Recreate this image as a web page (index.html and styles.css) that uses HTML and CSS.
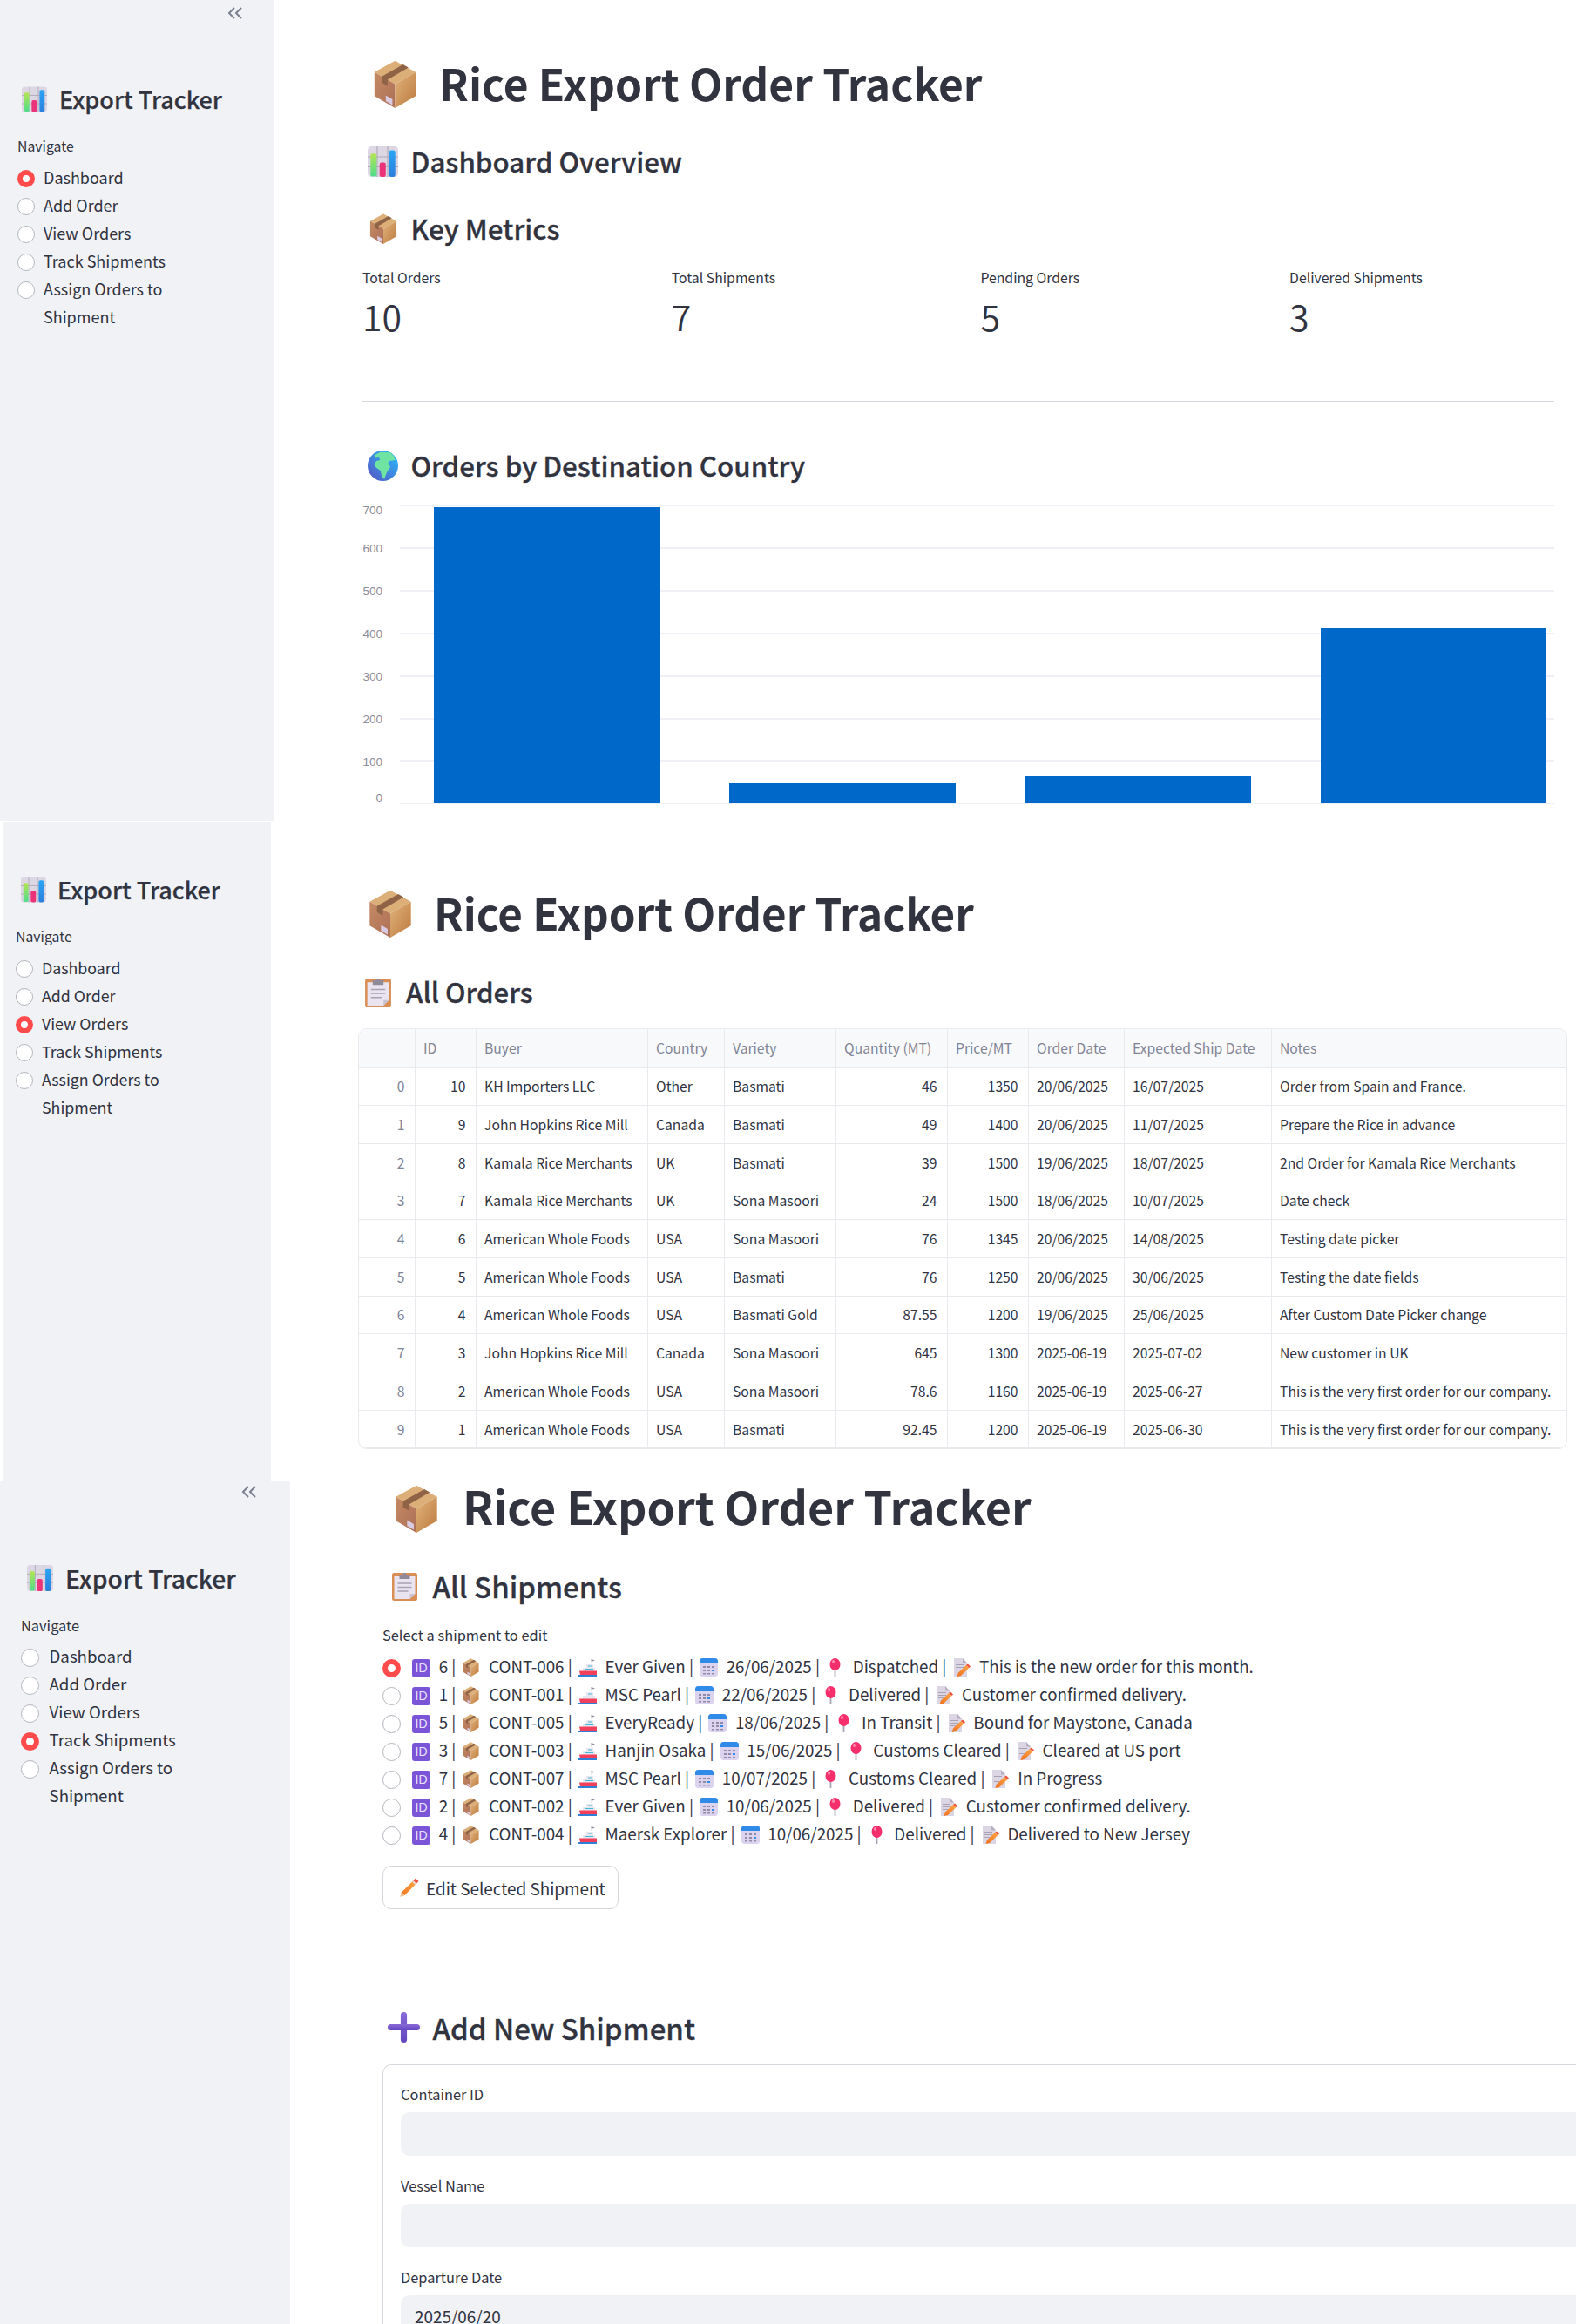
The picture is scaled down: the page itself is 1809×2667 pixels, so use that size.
FILE: index.html
```html
<!DOCTYPE html>
<html lang="en">
<head>
<meta charset="utf-8">
<title>Rice Export Order Tracker</title>
<link rel="stylesheet" href="styles.css">
</head>
<body>
<svg class="icon-defs" aria-hidden="true">
  <defs>
    <linearGradient id="g-left" x1="0" y1="0" x2="1" y2="1"><stop offset="0" stop-color="#c48a62"/><stop offset="1" stop-color="#ad6f58"/></linearGradient>
    <linearGradient id="g-right" x1="0" y1="0" x2="1" y2="1"><stop offset="0" stop-color="#e0b37c"/><stop offset="1" stop-color="#bd7a3e"/></linearGradient>
    <linearGradient id="g-green" x1="0" y1="0" x2="0" y2="1"><stop offset="0" stop-color="#b4e455"/><stop offset="1" stop-color="#4fdc8a"/></linearGradient>
    <linearGradient id="g-blue" x1="0" y1="0" x2="0" y2="1"><stop offset="0" stop-color="#2aa5f5"/><stop offset="1" stop-color="#2a7fdc"/></linearGradient>
    <linearGradient id="g-globe" x1="1" y1="0" x2="0" y2="1"><stop offset="0" stop-color="#28c0ff"/><stop offset="1" stop-color="#5550c0"/></linearGradient>
    <linearGradient id="g-purple" x1="0" y1="0" x2="0" y2="1"><stop offset="0" stop-color="#8a6ad8"/><stop offset="1" stop-color="#6246c0"/></linearGradient>
    <linearGradient id="g-pencil" x1="1" y1="0" x2="0" y2="1"><stop offset="0" stop-color="#ffa94a"/><stop offset="1" stop-color="#ee6f1f"/></linearGradient>
  </defs>
  <symbol id="i-box" viewBox="0 0 32 36">
    <path fill="#dcae78" d="M16 0.5 31.5 9 16 18 0.5 9z"/>
    <path fill="url(#g-left)" d="M0.5 9 16 18v18L0.5 27z"/>
    <path fill="url(#g-right)" d="M31.5 9 16 18v18l15.5-9z"/>
    <path fill="#8f6446" d="M6 12.2 22 3.2 26 5.5 10.4 14.7v4.7L6 16.9z"/>
    <path fill="#d9cbe3" d="M9 26.5l5 2.9v4.3l-5-2.9z"/>
  </symbol>
  <symbol id="i-chart" viewBox="0 0 32 32">
    <rect width="32" height="32" rx="4" fill="#ddd7e4"/>
    <path stroke="#b0aab8" stroke-width="1" d="M10 0v32M21 0v32M0 11h32M0 21.500h32" fill="none"/>
    <rect x="3" y="7.500" width="6.500" height="24" rx="2" fill="url(#g-green)"/>
    <rect x="12.500" y="17" width="6.500" height="15" rx="2" fill="#ea3378"/>
    <rect x="22.500" y="4" width="6.500" height="28" rx="2" fill="url(#g-blue)"/>
  </symbol>
  <symbol id="i-clip" viewBox="0 0 30 34">
    <rect x="0.500" y="2" width="29" height="32" rx="2.500" fill="#d88e55"/>
    <path fill="#e9e4f0" d="M3 6h24v20l-6 6H3z"/>
    <path fill="#c9c2d3" d="M27 26h-6v6z"/>
    <path stroke="#a8a2b4" stroke-width="1.400" d="M7 14h16M7 18.500h16M7 23h12" fill="none"/>
    <path fill="#8f8a98" d="M9 4h4a2 2 0 0 1 4 0h4v5H9z"/>
  </symbol>
  <symbol id="i-globe" viewBox="0 0 32 32">
    <circle cx="16" cy="16" r="16" fill="url(#g-globe)"/>
    <path fill="#6fe3a2" d="M7 5 13 1.500 24 2 27.500 6 29 10 23 11 21 14 24 17 20 23 17.500 30 15 28 13.500 21 9 18 7 15 9 11 13 10 12 7 8 8z"/>
  </symbol>
  <symbol id="i-plus" viewBox="0 0 36 34">
    <rect x="14.500" y="0" width="7" height="34" rx="3.500" fill="url(#g-purple)"/>
    <rect x="0" y="13.500" width="36" height="7" rx="3.500" fill="url(#g-purple)"/>
  </symbol>
  <symbol id="i-ship" viewBox="0 0 21 21">
    <path fill="#8a8fa0" d="M14.500 1 19 2.500 14.500 4z"/>
    <path fill="#e8e6ee" d="M14 3h1.500v3H14zM9 7h8v4H9zM5 11h14v4H5z"/>
    <path fill="#41b8d8" d="M7 12h10v1H7zM11 8.500h5v1h-5z"/>
    <path fill="#f23f5c" d="M1 14.500h20v4.500H2z"/>
    <path fill="#2f7fd8" d="M0 19h21v2H0z"/>
  </symbol>
  <symbol id="i-cal" viewBox="0 0 21 21">
    <rect y="0" width="21" height="21" rx="3.500" fill="#dcd3ee"/>
    <path fill="#2f8ae8" d="M0 3.500A3.500 3.500 0 0 1 3.500 0h14A3.500 3.500 0 0 1 21 3.500V6H0z"/>
    <path fill="#8f8aa8" d="M4 9h3v2H4zM9 9h3v2H9zM14 9h3v2h-3zM4 13h3v2H4zM9 13h3v2H9zM4 17h3v1.500H4zM9 17h3v1.500H9zM14 17h3v1.500h-3z"/>
    <path fill="#2f8ae8" d="M14 13h3v2h-3z"/>
  </symbol>
  <symbol id="i-pin" viewBox="0 0 21 21">
    <path stroke="#a8a4b4" stroke-width="1.800" d="M10.500 10v11" fill="none"/>
    <ellipse cx="10.500" cy="7" rx="6" ry="7" fill="#f42f6c"/>
    <ellipse cx="8.500" cy="4" rx="1.500" ry="2" fill="#ff8fb0"/>
  </symbol>
  <symbol id="i-memo" viewBox="0 0 21 21">
    <path fill="#dcd6e4" d="M2 0h10l5 5.500V21H2z"/>
    <path fill="#b7afc2" d="M12 0l5 5.500h-5z"/>
    <path stroke="#a8a2b4" stroke-width="1" d="M4 7.500h9M4 10.500h9M4 13.500h6" fill="none"/>
    <path fill="url(#g-pencil)" d="M16 8 19.500 11 10 20 5.500 21 7 16.500z"/>
    <path fill="#f0503c" d="M16 8 18 6.500 21 9.500 19.500 11z"/>
  </symbol>
  <symbol id="i-pencil" viewBox="0 0 22 22">
    <path fill="url(#g-pencil)" d="M15 3.500 18.500 7 5.500 20 .5 21.500 2 16.500z"/>
    <path fill="#f0503c" d="M15 3.500 18 .5 21.500 4 18.500 7z"/>
    <path fill="#efd3d0" d="M14 4.500 15.500 3 19 6.500 17.500 8z"/>
    <path fill="#e8c79a" d="M2 16.500 5.500 20 .5 21.500z"/>
  </symbol>
</svg>

<section class="screen screen-dashboard">
  <aside class="sidebar">
    <div class="collapse"><svg class="chevrons" viewBox="0 0 18 14"><path d="M8 1 2 7l6 6M16 1l-6 6 6 6"/></svg></div>
    <h2 class="side-title"><svg class="side-icon"><use href="#i-chart"/></svg>Export Tracker</h2>
    <div class="side-label">Navigate</div>
    <ul class="nav">
      <li class="nav-item"><span class="radio radio-on"></span><span>Dashboard</span></li>
      <li class="nav-item"><span class="radio"></span><span>Add Order</span></li>
      <li class="nav-item"><span class="radio"></span><span>View Orders</span></li>
      <li class="nav-item"><span class="radio"></span><span>Track Shipments</span></li>
      <li class="nav-item"><span class="radio"></span><span>Assign Orders to<br>Shipment</span></li>
    </ul>
  </aside>
  <main class="main">
    <h1 class="page-title"><svg class="title-icon"><use href="#i-box"/></svg>Rice Export Order Tracker</h1>
    <h2 class="heading heading-overview"><svg class="head-icon"><use href="#i-chart"/></svg>Dashboard Overview</h2>
    <h3 class="heading heading-metrics"><svg class="head-icon head-icon-box"><use href="#i-box"/></svg>Key Metrics</h3>
    <div class="metrics">
      <div class="metric"><div class="metric-label">Total Orders</div><div class="metric-value">10</div></div>
      <div class="metric"><div class="metric-label">Total Shipments</div><div class="metric-value">7</div></div>
      <div class="metric"><div class="metric-label">Pending Orders</div><div class="metric-value">5</div></div>
      <div class="metric"><div class="metric-label">Delivered Shipments</div><div class="metric-value">3</div></div>
    </div>
    <hr class="rule rule-metrics">
    <h2 class="heading heading-chart"><svg class="head-icon"><use href="#i-globe"/></svg>Orders by Destination Country</h2>
    <svg class="chart" viewBox="0 0 1368 355">
      <g class="chart-grid">
        <line x1="43" x2="1368" y1="5" y2="5"/><line x1="43" x2="1368" y1="54" y2="54"/>
        <line x1="43" x2="1368" y1="103" y2="103"/><line x1="43" x2="1368" y1="152" y2="152"/>
        <line x1="43" x2="1368" y1="201" y2="201"/><line x1="43" x2="1368" y1="250" y2="250"/>
        <line x1="43" x2="1368" y1="298" y2="298"/><line x1="43" x2="1368" y1="347" y2="347"/>
      </g>
      <g class="chart-bars">
        <rect x="82" y="7" width="260" height="340"/>
        <rect x="421" y="324" width="260" height="23"/>
        <rect x="761" y="316" width="259" height="31"/>
        <rect x="1100" y="146" width="259" height="201"/>
      </g>
      <g class="chart-ticks">
        <text x="23" y="15">700</text><text x="23" y="59">600</text><text x="23" y="108">500</text>
        <text x="23" y="157">400</text><text x="23" y="206">300</text><text x="23" y="255">200</text>
        <text x="23" y="304">100</text><text x="23" y="345">0</text>
      </g>
    </svg>
  </main>
</section>

<section class="screen screen-orders">
  <aside class="sidebar">
    <h2 class="side-title"><svg class="side-icon"><use href="#i-chart"/></svg>Export Tracker</h2>
    <div class="side-label">Navigate</div>
    <ul class="nav">
      <li class="nav-item"><span class="radio"></span><span>Dashboard</span></li>
      <li class="nav-item"><span class="radio"></span><span>Add Order</span></li>
      <li class="nav-item"><span class="radio radio-on"></span><span>View Orders</span></li>
      <li class="nav-item"><span class="radio"></span><span>Track Shipments</span></li>
      <li class="nav-item"><span class="radio"></span><span>Assign Orders to<br>Shipment</span></li>
    </ul>
  </aside>
  <main class="main">
    <h1 class="page-title"><svg class="title-icon"><use href="#i-box"/></svg>Rice Export Order Tracker</h1>
    <h2 class="heading heading-orders"><svg class="head-icon"><use href="#i-clip"/></svg>All Orders</h2>
    <div class="table-wrap">
      <table class="orders">
        <colgroup>
          <col class="c-idx"><col class="c-id"><col class="c-buyer"><col class="c-country"><col class="c-variety"><col class="c-qty"><col class="c-price"><col class="c-odate"><col class="c-sdate"><col class="c-notes">
        </colgroup>
        <thead>
          <tr><th></th><th>ID</th><th>Buyer</th><th>Country</th><th>Variety</th><th>Quantity (MT)</th><th>Price/MT</th><th>Order Date</th><th>Expected Ship Date</th><th>Notes</th></tr>
        </thead>
        <tbody>
          <tr><td class="idx">0</td><td class="num">10</td><td>KH Importers LLC</td><td>Other</td><td>Basmati</td><td class="num">46</td><td class="num">1350</td><td>20/06/2025</td><td>16/07/2025</td><td>Order from Spain and France.</td></tr>
          <tr><td class="idx">1</td><td class="num">9</td><td>John Hopkins Rice Mill</td><td>Canada</td><td>Basmati</td><td class="num">49</td><td class="num">1400</td><td>20/06/2025</td><td>11/07/2025</td><td>Prepare the Rice in advance</td></tr>
          <tr><td class="idx">2</td><td class="num">8</td><td>Kamala Rice Merchants</td><td>UK</td><td>Basmati</td><td class="num">39</td><td class="num">1500</td><td>19/06/2025</td><td>18/07/2025</td><td>2nd Order for Kamala Rice Merchants</td></tr>
          <tr><td class="idx">3</td><td class="num">7</td><td>Kamala Rice Merchants</td><td>UK</td><td>Sona Masoori</td><td class="num">24</td><td class="num">1500</td><td>18/06/2025</td><td>10/07/2025</td><td>Date check</td></tr>
          <tr><td class="idx">4</td><td class="num">6</td><td>American Whole Foods</td><td>USA</td><td>Sona Masoori</td><td class="num">76</td><td class="num">1345</td><td>20/06/2025</td><td>14/08/2025</td><td>Testing date picker</td></tr>
          <tr><td class="idx">5</td><td class="num">5</td><td>American Whole Foods</td><td>USA</td><td>Basmati</td><td class="num">76</td><td class="num">1250</td><td>20/06/2025</td><td>30/06/2025</td><td>Testing the date fields</td></tr>
          <tr><td class="idx">6</td><td class="num">4</td><td>American Whole Foods</td><td>USA</td><td>Basmati Gold</td><td class="num">87.55</td><td class="num">1200</td><td>19/06/2025</td><td>25/06/2025</td><td>After Custom Date Picker change</td></tr>
          <tr><td class="idx">7</td><td class="num">3</td><td>John Hopkins Rice Mill</td><td>Canada</td><td>Sona Masoori</td><td class="num">645</td><td class="num">1300</td><td>2025-06-19</td><td>2025-07-02</td><td>New customer in UK</td></tr>
          <tr><td class="idx">8</td><td class="num">2</td><td>American Whole Foods</td><td>USA</td><td>Sona Masoori</td><td class="num">78.6</td><td class="num">1160</td><td>2025-06-19</td><td>2025-06-27</td><td>This is the very first order for our company.</td></tr>
          <tr><td class="idx">9</td><td class="num">1</td><td>American Whole Foods</td><td>USA</td><td>Basmati</td><td class="num">92.45</td><td class="num">1200</td><td>2025-06-19</td><td>2025-06-30</td><td>This is the very first order for our company.</td></tr>
        </tbody>
      </table>
    </div>
  </main>
</section>

<section class="screen screen-shipments">
  <aside class="sidebar">
    <div class="collapse"><svg class="chevrons" viewBox="0 0 18 14"><path d="M8 1 2 7l6 6M16 1l-6 6 6 6"/></svg></div>
    <h2 class="side-title"><svg class="side-icon"><use href="#i-chart"/></svg>Export Tracker</h2>
    <div class="side-label">Navigate</div>
    <ul class="nav">
      <li class="nav-item"><span class="radio"></span><span>Dashboard</span></li>
      <li class="nav-item"><span class="radio"></span><span>Add Order</span></li>
      <li class="nav-item"><span class="radio"></span><span>View Orders</span></li>
      <li class="nav-item"><span class="radio radio-on"></span><span>Track Shipments</span></li>
      <li class="nav-item"><span class="radio"></span><span>Assign Orders to<br>Shipment</span></li>
    </ul>
  </aside>
  <main class="main">
    <h1 class="page-title"><svg class="title-icon"><use href="#i-box"/></svg>Rice Export Order Tracker</h1>
    <h2 class="heading heading-shipments"><svg class="head-icon"><use href="#i-clip"/></svg>All Shipments</h2>
    <div class="field-label select-label">Select a shipment to edit</div>
    <ul class="ship-list">
      <li class="ship-row"><span class="radio radio-on"></span><span class="ship-text"><span class="id-badge">ID</span> 6 | <svg class="emo"><use href="#i-box"/></svg> CONT-006 | <svg class="emo"><use href="#i-ship"/></svg> Ever Given | <svg class="emo"><use href="#i-cal"/></svg> 26/06/2025 | <svg class="emo"><use href="#i-pin"/></svg> Dispatched | <svg class="emo"><use href="#i-memo"/></svg> This is the new order for this month.</span></li>
      <li class="ship-row"><span class="radio"></span><span class="ship-text"><span class="id-badge">ID</span> 1 | <svg class="emo"><use href="#i-box"/></svg> CONT-001 | <svg class="emo"><use href="#i-ship"/></svg> MSC Pearl | <svg class="emo"><use href="#i-cal"/></svg> 22/06/2025 | <svg class="emo"><use href="#i-pin"/></svg> Delivered | <svg class="emo"><use href="#i-memo"/></svg> Customer confirmed delivery.</span></li>
      <li class="ship-row"><span class="radio"></span><span class="ship-text"><span class="id-badge">ID</span> 5 | <svg class="emo"><use href="#i-box"/></svg> CONT-005 | <svg class="emo"><use href="#i-ship"/></svg> EveryReady | <svg class="emo"><use href="#i-cal"/></svg> 18/06/2025 | <svg class="emo"><use href="#i-pin"/></svg> In Transit | <svg class="emo"><use href="#i-memo"/></svg> Bound for Maystone, Canada</span></li>
      <li class="ship-row"><span class="radio"></span><span class="ship-text"><span class="id-badge">ID</span> 3 | <svg class="emo"><use href="#i-box"/></svg> CONT-003 | <svg class="emo"><use href="#i-ship"/></svg> Hanjin Osaka | <svg class="emo"><use href="#i-cal"/></svg> 15/06/2025 | <svg class="emo"><use href="#i-pin"/></svg> Customs Cleared | <svg class="emo"><use href="#i-memo"/></svg> Cleared at US port</span></li>
      <li class="ship-row"><span class="radio"></span><span class="ship-text"><span class="id-badge">ID</span> 7 | <svg class="emo"><use href="#i-box"/></svg> CONT-007 | <svg class="emo"><use href="#i-ship"/></svg> MSC Pearl | <svg class="emo"><use href="#i-cal"/></svg> 10/07/2025 | <svg class="emo"><use href="#i-pin"/></svg> Customs Cleared | <svg class="emo"><use href="#i-memo"/></svg> In Progress</span></li>
      <li class="ship-row"><span class="radio"></span><span class="ship-text"><span class="id-badge">ID</span> 2 | <svg class="emo"><use href="#i-box"/></svg> CONT-002 | <svg class="emo"><use href="#i-ship"/></svg> Ever Given | <svg class="emo"><use href="#i-cal"/></svg> 10/06/2025 | <svg class="emo"><use href="#i-pin"/></svg> Delivered | <svg class="emo"><use href="#i-memo"/></svg> Customer confirmed delivery.</span></li>
      <li class="ship-row"><span class="radio"></span><span class="ship-text"><span class="id-badge">ID</span> 4 | <svg class="emo"><use href="#i-box"/></svg> CONT-004 | <svg class="emo"><use href="#i-ship"/></svg> Maersk Explorer | <svg class="emo"><use href="#i-cal"/></svg> 10/06/2025 | <svg class="emo"><use href="#i-pin"/></svg> Delivered | <svg class="emo"><use href="#i-memo"/></svg> Delivered to New Jersey</span></li>
    </ul>
    <button class="btn" type="button"><svg class="btn-icon"><use href="#i-pencil"/></svg>Edit Selected Shipment</button>
    <hr class="rule rule-ship">
    <h2 class="heading heading-add"><svg class="head-icon head-icon-plus"><use href="#i-plus"/></svg>Add New Shipment</h2>
    <form class="card">
      <div class="field-label">Container ID</div>
      <div class="input"></div>
      <div class="field-label field-gap">Vessel Name</div>
      <div class="input"></div>
      <div class="field-label field-gap">Departure Date</div>
      <div class="input input-date">2025/06/20</div>
    </form>
  </main>
</section>
</body>
</html>
```

FILE: styles.css
```css
* { box-sizing: border-box; }
html, body { margin: 0; padding: 0; background: #fff; }
body {
  width: 1809px;
  height: 2667px;
  overflow: hidden;
  font-family: "Noto Sans CJK SC", "Source Sans Pro", "Noto Sans", sans-serif;
  color: #31333f;
}
.icon-defs { position: absolute; width: 0; height: 0; }
h1, h2, h3, ul { margin: 0; padding: 0; list-style: none; }

/* Screens: three stacked captures at slightly different zoom */
.screen { display: flex; overflow: hidden; background: #fff; }
.screen-dashboard { height: 943px; --h1: 49.700px; --h2: 31.300px; --side: 27px; --text: 18px; --small: 15.800px; }
.screen-orders { height: 757px; padding-left: 3px; --h1: 49.400px; --h2: 31.200px; --side: 27px; --text: 17.800px; --small: 15.800px; }
.screen-shipments { height: 967px; --h1: 52px; --h2: 33px; --side: 28.300px; --text: 18.700px; --small: 16.400px; }

/* Sidebar */
.sidebar { flex: none; background: #f0f2f6; }
.screen-dashboard .sidebar { width: 315px; height: 942px; padding: 8px 0 0 20px; }
.screen-orders .sidebar { width: 308px; padding: 58px 0 0 15px; }
.screen-shipments .sidebar { width: 333px; padding: 5px 0 0 24px; }

.collapse { display: flex; justify-content: flex-end; height: 14px; }
.screen-dashboard .collapse { padding-right: 36px; }
.screen-shipments .collapse { padding-right: 38px; }
.chevrons { width: 18px; height: 14px; fill: none; stroke: #7b7f8e; stroke-width: 2; }

.side-title { display: flex; align-items: center; font-size: var(--side); font-weight: 500; line-height: 40px; -webkit-text-stroke: .25px currentColor; }
.screen-dashboard .side-title, .screen-shipments .side-title { margin-top: 71.500px; }
.side-icon { width: 29px; height: 30px; margin: 0 14px 0 5px; flex: none; }
.screen-orders .side-icon { margin: 0 13px 0 6px; }
.screen-shipments .side-icon { width: 30px; margin: 0 14px 0 7px; }
.side-label { font-size: var(--small); line-height: 24px; margin-top: 22.300px; }
.nav { margin-top: 7px; font-size: var(--text); line-height: 32px; }
.nav-item { display: flex; align-items: flex-start; }

.radio { flex: none; display: block; width: 20px; height: 20px; margin: 8px 10px 0 0; border: 1px solid #b4b6be; border-radius: 50%; background: #fff; }
.radio-on { border: 6.500px solid #ff4b4b; }
.screen-shipments .radio { width: 21px; height: 21px; margin-right: 11.500px; }

/* Main column */
.main { flex: 1; min-width: 0; overflow: hidden; }
.screen-dashboard .main { padding: 64px 25px 0 101px; }
.screen-orders .main { padding: 73.500px 10px 0 100px; }
.screen-shipments .main { padding: 2.300px 0 0 106px; }

.page-title { display: flex; align-items: center; height: 60px; font-size: var(--h1); font-weight: 700; line-height: 60px; }
.title-icon { flex: none; width: 49px; height: 55px; margin: 4px 26px 0 13px; }
.screen-orders .title-icon { width: 52px; height: 55px; margin: 4px 24px 0 11px; }
.screen-shipments .page-title { height: 52px; line-height: 52px; }
.screen-shipments .title-icon { width: 52px; height: 55px; margin: 6px 27px 0 13px; }

.heading { display: flex; align-items: center; font-size: var(--h2); font-weight: 500; line-height: 46px; -webkit-text-stroke: .3px currentColor; }
.head-icon { flex: none; width: 35px; height: 35px; margin: 0 14.500px 0 6px; }
.head-icon-box { width: 32px; margin: 0 15.500px 0 8px; }
.heading-overview { margin-top: 38.400px; }
.heading-metrics { margin-top: 31px; }
.heading-chart { margin-top: 50.700px; }
.heading-orders { margin-top: 38.500px; }
.heading-shipments { margin-top: 42.400px; }
.heading-add { margin-top: 51.200px; }
.heading-orders .head-icon { width: 32px; margin: 0 16px 0 7px; }
.heading-shipments .head-icon { width: 31px; height: 34px; margin: 0 16.500px 0 10px; }
.head-icon-plus { width: 37px; height: 35px; margin: 0 14.500px 0 6px; }

/* Metrics */
.metrics { display: flex; margin-top: 21.300px; }
.metric { flex: none; width: 354.700px; }
.metric-label { font-size: var(--small); line-height: 24px; }
.metric-value { font-size: 41px; font-weight: 350; line-height: 56px; margin-top: 3px; }

.rule { border: 0; border-top: 1px solid #d5d7dc; margin: 0; }
.rule-metrics { margin-top: 70px; }
.rule-ship { margin-top: 60px; }

/* Chart */
.chart { display: block; width: 1368px; height: 355px; margin-top: 17.300px; }
.chart-grid line { stroke: #eef0f5; stroke-width: 2; }
.chart-bars rect { fill: #0068c9; }
.chart-ticks text { font-family: "Liberation Sans", Arial, sans-serif; font-size: 13.500px; fill: #8a8d9c; text-anchor: end; }

/* Orders table */
.table-wrap { margin-top: 19px; border: 1px solid #e8eaee; border-radius: 10px; overflow: hidden; height: 483px; }
.orders { width: 1388px; table-layout: fixed; border-collapse: collapse; font-size: 15.700px; }
.c-idx { width: 64px; } .c-id { width: 70px; } .c-buyer { width: 197px; } .c-country { width: 88px; }
.c-variety { width: 128px; } .c-qty { width: 128px; } .c-price { width: 93px; } .c-odate { width: 110px; }
.c-sdate { width: 169px; } .c-notes { width: 341px; }
.orders th, .orders td { border: 1px solid #e8eaee; padding: 0 11px 0 9.500px; text-align: left; font-weight: 400; white-space: nowrap; overflow: hidden; }
.orders tr > :first-child { border-left: 0; }
.orders tr > :last-child { border-right: 0; }
.orders thead th { border-top: 0; height: 44px; background: #f8f9fb; color: #808495; }
.orders tbody td { height: 43.700px; }
.orders .num { text-align: right; }
.orders .idx { text-align: right; color: #808495; }

/* Shipments */
.field-label { font-size: var(--small); line-height: 24px; }
.select-label { margin-top: 21.600px; }
.ship-list { margin-top: 10.200px; }
.ship-row { display: flex; height: 32px; font-size: 18.800px; line-height: 28px; white-space: nowrap; }
.screen-shipments .ship-row .radio { margin: 5.500px 13px 0 0; }
.id-badge { display: inline-block; width: 21px; height: 21px; border-radius: 3px; background: #7a55d8; color: #e8e2fa; font: 400 14px/21px "Liberation Sans", Arial, sans-serif; text-align: center; vertical-align: 1.600px; margin-right: 5.500px; }
.emo { display: inline-block; width: 21px; height: 21px; vertical-align: -4px; margin: 0 5.500px 0 2.800px; }

.btn { display: flex; align-items: center; width: 271px; height: 50px; margin-top: 19px; padding: 0 0 0 19px; background: #fff; border: 1px solid #d5d7dc; border-radius: 10px; color: #31333f; font: inherit; font-size: 18.900px; }
.btn-icon { width: 22px; height: 22px; margin-right: 8px; flex: none; }

/* Form */
.card { width: 1500px; height: 400px; margin-top: 19.800px; padding: 20.800px 20px; border: 1px solid #d5d7dc; border-radius: 10px; }
.input { height: 50px; margin-top: 9.200px; background: #f0f2f6; border-radius: 10px; }
.field-gap { margin-top: 21.800px; }
.input-date { padding: 0 16px; font-size: 18.900px; line-height: 47.600px; }
```
